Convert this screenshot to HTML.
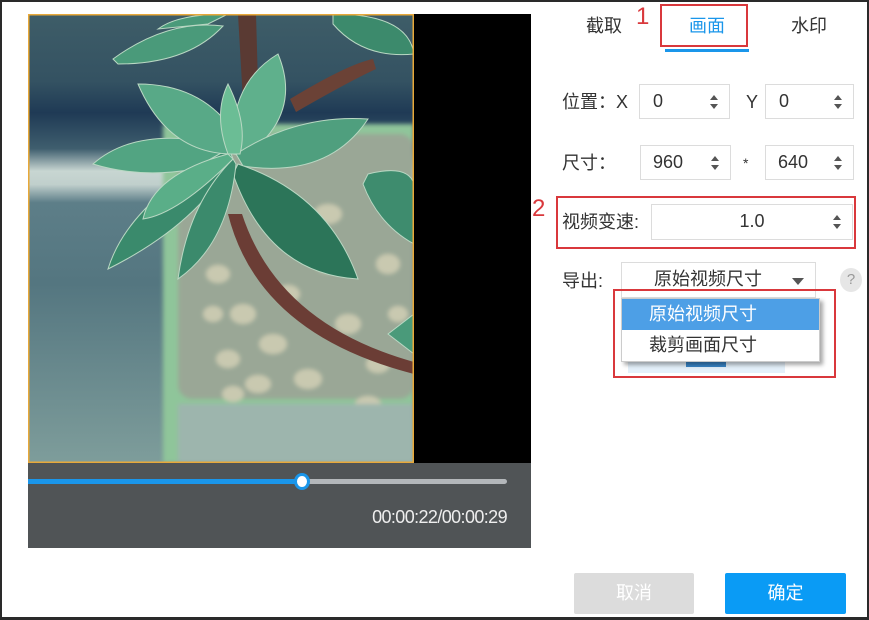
<!DOCTYPE html>
<html><head><meta charset="utf-8"><style>
*{margin:0;padding:0;box-sizing:border-box}
body{width:869px;height:620px;overflow:hidden;background:#fff;font-family:"Liberation Sans","Noto Sans CJK SC",sans-serif;color:#333;position:relative}
.frame{position:absolute;left:0;top:0;width:869px;height:620px;border:2px solid #2a2a2a;border-bottom-width:3px;pointer-events:none;z-index:50}
.a{position:absolute}
.lbl{position:absolute;font-size:18px;color:#333;line-height:20px}
.inp{position:absolute;border:1px solid #dcdcdc;background:#fff;font-size:18px;line-height:33px}
.spin{position:absolute;right:10px;top:9px;width:10px;height:16px}
.red{position:absolute;border:2px solid #d9383c;z-index:20}
</style></head><body>
<div class="frame"></div>
<div class="a" style="left:28px;top:14px;width:503px;height:534px;background:#000"></div>
<svg class="a" style="left:28px;top:14px" width="386" height="449" viewBox="0 0 386 449">
<defs>
<linearGradient id="bg" x1="0" y1="0" x2="0" y2="1">
<stop offset="0" stop-color="#3e5d68"/><stop offset=".15" stop-color="#345262"/><stop offset=".22" stop-color="#1f3a55"/><stop offset=".3" stop-color="#3f5e6e"/><stop offset=".35" stop-color="#c8d6d2"/><stop offset=".38" stop-color="#c0cfcc"/><stop offset=".42" stop-color="#5d7e88"/><stop offset=".6" stop-color="#547680"/><stop offset="1" stop-color="#7e9d9b"/>
</linearGradient>
<filter id="bl"><feGaussianBlur stdDeviation="2"/></filter>
</defs>
<rect width="386" height="449" fill="url(#bg)"/>
<g filter="url(#bl)">
<rect x="135" y="110" width="251" height="339" fill="#8fc59a"/>
<rect x="150" y="120" width="236" height="265" rx="14" fill="#9aa796"/>
<g fill="#c9c9b0">
<ellipse cx="190" cy="260" rx="12" ry="9"/><ellipse cx="215" cy="300" rx="13" ry="10"/><ellipse cx="245" cy="330" rx="14" ry="10"/><ellipse cx="200" cy="345" rx="12" ry="9"/><ellipse cx="280" cy="365" rx="14" ry="10"/><ellipse cx="320" cy="310" rx="13" ry="10"/><ellipse cx="350" cy="350" rx="12" ry="9"/><ellipse cx="300" cy="200" rx="14" ry="10"/><ellipse cx="360" cy="250" rx="12" ry="10"/><ellipse cx="230" cy="370" rx="13" ry="9"/><ellipse cx="185" cy="300" rx="10" ry="8"/><ellipse cx="340" cy="390" rx="13" ry="8"/><ellipse cx="260" cy="280" rx="12" ry="9"/><ellipse cx="300" cy="250" rx="12" ry="9"/><ellipse cx="205" cy="380" rx="11" ry="8"/><ellipse cx="370" cy="300" rx="10" ry="8"/>
</g>
<rect x="150" y="390" width="236" height="59" fill="#9db5ad"/>
</g>
<path d="M210 0 L228 0 L232 140 L218 140Z" fill="#5a3a33"/>
<path d="M262 85 Q320 50 345 45 L348 55 Q320 68 268 98Z" fill="#6b4236"/>
<path d="M200 200 Q230 320 386 360 L386 348 Q250 310 214 200Z" fill="#6b3d35"/>
<g stroke="#b9d8c3" stroke-width="1">
<path d="M205 145 Q130 170 65 150 Q110 110 200 132Z" fill="#52a482"/>
<path d="M205 145 Q170 210 80 255 Q100 190 195 138Z" fill="#3a8a6c"/>
<path d="M205 140 Q140 140 110 70 Q180 70 212 128Z" fill="#58a987"/>
<path d="M205 140 Q200 70 250 40 Q275 100 218 142Z" fill="#5fb08c"/>
<path d="M208 140 Q270 100 340 105 Q300 165 215 152Z" fill="#4f9f7e"/>
<path d="M210 150 Q300 180 330 265 Q240 260 205 160Z" fill="#2c7559"/>
<path d="M208 150 Q200 230 150 265 Q160 190 205 145Z" fill="#3b8a6c"/>
<path d="M205 145 Q150 200 115 205 Q125 160 200 140Z" fill="#5aae88"/>
<path d="M200 140 Q185 100 200 70 Q220 110 212 140Z" fill="#6bbd95"/>
<path d="M85 45 Q140 5 195 12 Q160 50 90 50Z" fill="#4a9a7a"/>
<path d="M130 15 Q150 0 200 0 L180 10Z" fill="#4a9a7a"/>
<path d="M305 0 Q380 0 386 40 Q335 45 305 10Z" fill="#3c8a6c"/>
<path d="M340 160 Q380 150 386 170 L386 230 Q350 210 335 170Z" fill="#3e8c6e"/>
<path d="M360 320 L386 300 L386 340Z" fill="#4a9a7a"/>
</g>
<rect x="0.75" y="0.75" width="384.5" height="447.5" fill="none" stroke="#e8a93a" stroke-width="1.5"/>
</svg>
<div class="a" style="left:28px;top:463px;width:503px;height:85px;background:#505456"></div>
<div class="a" style="left:28px;top:479px;width:479px;height:5px;border-radius:3px;background:#b3b7ba"></div>
<div class="a" style="left:28px;top:479px;width:274px;height:5px;background:#1a96ea"></div>
<div class="a" style="left:294px;top:473px;width:16px;height:17px;border-radius:50%;background:#fff;border:3px solid #1a96ea"></div>
<div class="a" style="left:300px;top:505px;width:207px;text-align:right;color:#eee;font-size:18px;line-height:24px;letter-spacing:-0.6px">00:00:22/00:00:29</div>
<div class="lbl" style="left:586px;top:16px">截取</div>
<div class="lbl" style="left:689px;top:16px;color:#1a96ea">画面</div>
<div class="lbl" style="left:791px;top:16px">水印</div>
<div class="a" style="left:665px;top:49px;width:84px;height:3px;background:#1a96ea"></div>
<div class="red" style="left:660px;top:4px;width:88px;height:43px"></div>
<div class="a" style="left:636px;top:2px;color:#d9383c;font-size:24px;line-height:30px">1</div>
<div class="lbl" style="left:562px;top:92px">位置：X</div>
<div class="inp" style="left:639px;top:84px;width:91px;height:35px;padding-left:13px">0<svg class="spin" viewBox="0 0 10 16"><path d="M1 6L5 1L9 6Z M1 10L5 15L9 10Z" fill="#555"/></svg></div>
<div class="lbl" style="left:746px;top:92px">Y</div>
<div class="inp" style="left:765px;top:84px;width:89px;height:35px;padding-left:13px">0<svg class="spin" viewBox="0 0 10 16"><path d="M1 6L5 1L9 6Z M1 10L5 15L9 10Z" fill="#555"/></svg></div>
<div class="lbl" style="left:562px;top:153px">尺寸：</div>
<div class="inp" style="left:640px;top:145px;width:91px;height:35px;padding-left:12px">960<svg class="spin" viewBox="0 0 10 16"><path d="M1 6L5 1L9 6Z M1 10L5 15L9 10Z" fill="#555"/></svg></div>
<div class="lbl" style="left:743px;top:153px;font-size:14px">*</div>
<div class="inp" style="left:765px;top:145px;width:89px;height:35px;padding-left:12px">640<svg class="spin" viewBox="0 0 10 16"><path d="M1 6L5 1L9 6Z M1 10L5 15L9 10Z" fill="#555"/></svg></div>
<div class="red" style="left:556px;top:196px;width:300px;height:53px"></div>
<div class="a" style="left:532px;top:194px;color:#d9383c;font-size:24px;line-height:30px">2</div>
<div class="lbl" style="left:562px;top:212px">视频变速:</div>
<div class="inp" style="left:651px;top:204px;width:202px;height:36px;text-align:center">1.0<svg class="spin" viewBox="0 0 10 16"><path d="M1 6L5 1L9 6Z M1 10L5 15L9 10Z" fill="#555"/></svg></div>
<div class="lbl" style="left:562px;top:271px">导出:</div>
<div class="inp" style="left:621px;top:262px;width:195px;height:36px;padding-left:32px">原始视频尺寸<svg class="a" style="right:11px;top:15px" width="12" height="7" viewBox="0 0 12 7"><path d="M0 0H12L6 7Z" fill="#555"/></svg></div>
<div class="a" style="left:840px;top:268px;width:22px;height:24px;border-radius:50%;background:#e6e6e6;color:#999;font-size:15px;text-align:center;line-height:24px">?</div>
<div class="a" style="left:628px;top:355px;width:157px;height:18px;background:#e4f0fa"></div>
<div class="a" style="left:686px;top:361px;width:40px;height:6px;background:#3a86c8"></div>
<div class="a" style="left:621px;top:298px;width:199px;height:64px;background:#fff;border:1px solid #ccc;box-shadow:3px 3px 4px rgba(0,0,0,.35)">
<div style="height:31px;background:#4d9fe6;color:#fff;font-size:18px;line-height:31px;padding-left:27px">原始视频尺寸</div>
<div style="height:31px;font-size:18px;line-height:31px;padding-left:27px">裁剪画面尺寸</div>
</div>
<div class="red" style="left:613px;top:289px;width:223px;height:89px"></div>
<div class="a" style="left:574px;top:573px;width:120px;height:41px;background:#dcdcdc;border-radius:2px;color:#fff;font-size:18px;text-align:center;line-height:41px">取消</div>
<div class="a" style="left:725px;top:573px;width:121px;height:41px;background:#0a9bf5;border-radius:2px;color:#fff;font-size:18px;text-align:center;line-height:41px">确定</div>
</body></html>
